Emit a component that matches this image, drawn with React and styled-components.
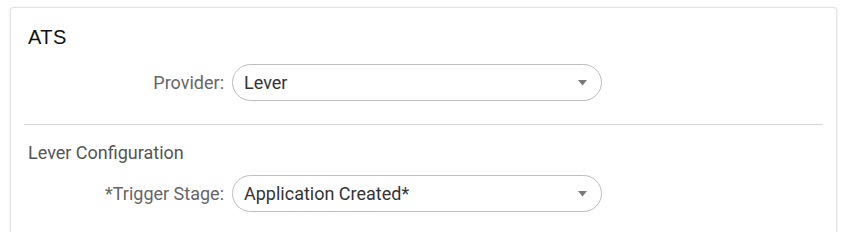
import styled, { createGlobalStyle } from 'styled-components'

const GlobalStyle = createGlobalStyle`
  body {
    margin: 0;
    background: #ffffff;
    font-family: Roboto, "Liberation Sans", sans-serif;
  }
`

function Caret() {
  return (
    <svg width="9" height="6" viewBox="0 0 9 6">
      <path d="M0 0 H9 L4.5 5.5 Z" fill="#7a7a7a" />
    </svg>
  )
}

function SelectField({ label, value }) {
  return (
    <Row>
      <Label>{label}</Label>
      <Select>
        <span>{value}</span>
        <Caret />
      </Select>
    </Row>
  )
}

function App() {
  return (
    <>
      <GlobalStyle />
      <Card>
        <Section>
          <Heading>ATS</Heading>
          <SelectField label="Provider:" value="Lever" />
        </Section>
        <Divider />
        <Section $sub>
          <SubHeading>Lever Configuration</SubHeading>
          <SelectField label="*Trigger Stage:" value="Application Created*" />
        </Section>
      </Card>
    </>
  )
}

const Card = styled.div`
  margin: 7px 9px 0 10px;
  height: 225px;
  box-sizing: border-box;
  padding: 0 13px;
  border: 1px solid #e4e4e4;
  border-bottom: none;
  border-radius: 4px 4px 0 0;
  box-shadow: -1px 0 2px rgba(0, 0, 0, 0.05), 1px 0 2px rgba(0, 0, 0, 0.05);
  background: #fff;
`

const Section = styled.div`
  display: flex;
  flex-direction: column;
  padding: ${({ $sub }) => ($sub ? '17px 0 0 4px' : '17px 0 23px 4px')};
`

const Divider = styled.hr`
  margin: 0;
  border: none;
  border-top: 1px solid #d6d6d6;
`

const Heading = styled.h3`
  margin: 0 0 15px;
  font-family: "Liberation Sans", Roboto, sans-serif;
  font-size: 20px;
  font-weight: 400;
  letter-spacing: 0.5px;
  line-height: 24px;
  color: #111;
`

const SubHeading = styled.h4`
  margin: 0 0 11px;
  font-size: 18px;
  font-weight: 400;
  line-height: 22px;
  color: #555;
`

const Row = styled.div`
  display: grid;
  grid-template-columns: 196px 370px;
  column-gap: 8px;
  align-items: center;
`

const Label = styled.label`
  text-align: right;
  font-size: 18px;
  line-height: 22px;
  color: #666;
`

const Select = styled.div`
  height: 37px;
  box-sizing: border-box;
  display: flex;
  align-items: center;
  justify-content: space-between;
  padding: 0 14px 0 11px;
  border: 1px solid #bdbdbd;
  border-radius: 19px;
  font-size: 18px;
  line-height: 22px;
  color: #333;
`

export default App
